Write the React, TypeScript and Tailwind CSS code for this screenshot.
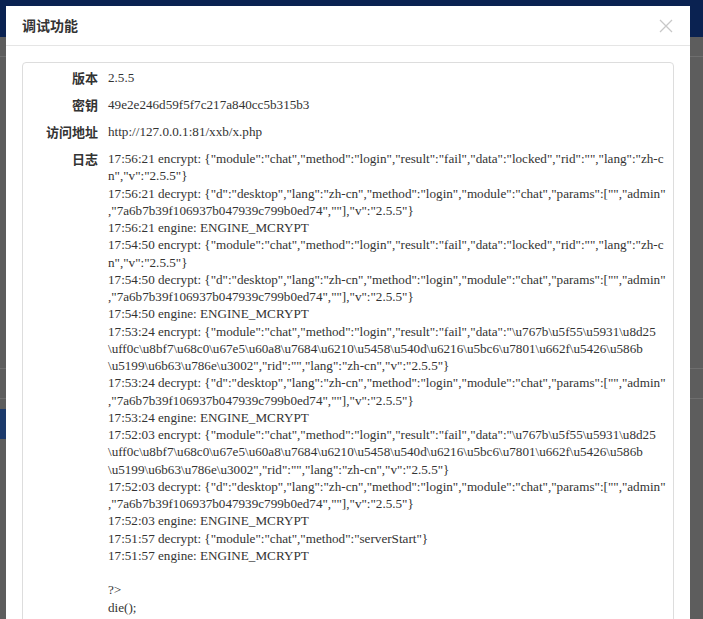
const logLines: string[] = [
  String.raw`17:56:21 encrypt: {"module":"chat","method":"login","result":"fail","data":"locked","rid":"","lang":"zh-c`,
  String.raw`n","v":"2.5.5"}`,
  String.raw`17:56:21 decrypt: {"d":"desktop","lang":"zh-cn","method":"login","module":"chat","params":["","admin"`,
  String.raw`,"7a6b7b39f106937b047939c799b0ed74",""],"v":"2.5.5"}`,
  String.raw`17:56:21 engine: ENGINE_MCRYPT`,
  String.raw`17:54:50 encrypt: {"module":"chat","method":"login","result":"fail","data":"locked","rid":"","lang":"zh-c`,
  String.raw`n","v":"2.5.5"}`,
  String.raw`17:54:50 decrypt: {"d":"desktop","lang":"zh-cn","method":"login","module":"chat","params":["","admin"`,
  String.raw`,"7a6b7b39f106937b047939c799b0ed74",""],"v":"2.5.5"}`,
  String.raw`17:54:50 engine: ENGINE_MCRYPT`,
  String.raw`17:53:24 encrypt: {"module":"chat","method":"login","result":"fail","data":"\u767b\u5f55\u5931\u8d25`,
  String.raw`\uff0c\u8bf7\u68c0\u67e5\u60a8\u7684\u6210\u5458\u540d\u6216\u5bc6\u7801\u662f\u5426\u586b`,
  String.raw`\u5199\u6b63\u786e\u3002","rid":"","lang":"zh-cn","v":"2.5.5"}`,
  String.raw`17:53:24 decrypt: {"d":"desktop","lang":"zh-cn","method":"login","module":"chat","params":["","admin"`,
  String.raw`,"7a6b7b39f106937b047939c799b0ed74",""],"v":"2.5.5"}`,
  String.raw`17:53:24 engine: ENGINE_MCRYPT`,
  String.raw`17:52:03 encrypt: {"module":"chat","method":"login","result":"fail","data":"\u767b\u5f55\u5931\u8d25`,
  String.raw`\uff0c\u8bf7\u68c0\u67e5\u60a8\u7684\u6210\u5458\u540d\u6216\u5bc6\u7801\u662f\u5426\u586b`,
  String.raw`\u5199\u6b63\u786e\u3002","rid":"","lang":"zh-cn","v":"2.5.5"}`,
  String.raw`17:52:03 decrypt: {"d":"desktop","lang":"zh-cn","method":"login","module":"chat","params":["","admin"`,
  String.raw`,"7a6b7b39f106937b047939c799b0ed74",""],"v":"2.5.5"}`,
  String.raw`17:52:03 engine: ENGINE_MCRYPT`,
  String.raw`17:51:57 decrypt: {"module":"chat","method":"serverStart"}`,
  String.raw`17:51:57 engine: ENGINE_MCRYPT`,
  "",
  "?>",
  "die();",
];

const labelClass =
  "w-[75px] shrink-0 text-right font-bold text-[13px] leading-[17px] text-[#333] [font-family:'Noto_Sans_CJK_SC',sans-serif]";
const valueClass = "pl-[10px] text-[13.15px] leading-[17px] text-[#333]";

function Row({ label, children }: { label: string; children: React.ReactNode }) {
  return (
    <div className="flex py-[5px]">
      <div className={labelClass}>{label}</div>
      <div className={valueClass}>{children}</div>
    </div>
  );
}

export default function App() {
  return (
    <div className="relative h-[619px] w-[703px] overflow-hidden bg-[#5d5d5d] [font-family:'Liberation_Serif','Noto_Sans_CJK_SC',serif]">
      {/* page behind the overlay */}
      <div className="h-[37px] bg-[#0a2251]" />
      <div className="h-[20px] border-b border-[#6e6e6e]" />
      <div className="mt-[311px] h-[31px] border-y border-[#6e6e6e]" />
      <div className="mt-[10px] h-[30px] w-[10px] bg-[#1c3a6b]" />

      {/* dialog */}
      <div className="absolute left-[6px] top-[6px] h-[640px] w-[684px] bg-white">
        <div className="flex h-[40px] items-center justify-between border-b border-[#e5e5e5] pl-[16px] pr-[17px]">
          <div className="text-[14px] font-bold text-[#333] [font-family:'Noto_Sans_CJK_SC',sans-serif]">调试功能</div>
          <svg width="14" height="14" viewBox="0 0 14 14" className="text-[#c8c8c8]">
            <path d="M1 1L13 13M13 1L1 13" stroke="currentColor" strokeWidth="1.3" fill="none" />
          </svg>
        </div>
        <div className="p-[16px]">
          <div className="h-[600px] rounded-[4px] border border-[#dddddd] pt-[1px]">
            <Row label="版本">2.5.5</Row>
            <Row label="密钥">49e2e246d59f5f7c217a840cc5b315b3</Row>
            <Row label="访问地址">http://127.0.0.1:81/xxb/x.php</Row>
            <div className="flex py-[5px]">
              <div className={labelClass}>日志</div>
              <div className="pl-[10px] text-[13.15px] leading-[17.25px] text-[#333]">
                {logLines.map((line, i) => (
                  <div key={i} className="h-[17.25px] whitespace-pre">
                    {line}
                  </div>
                ))}
              </div>
            </div>
          </div>
        </div>
      </div>
    </div>
  );
}
